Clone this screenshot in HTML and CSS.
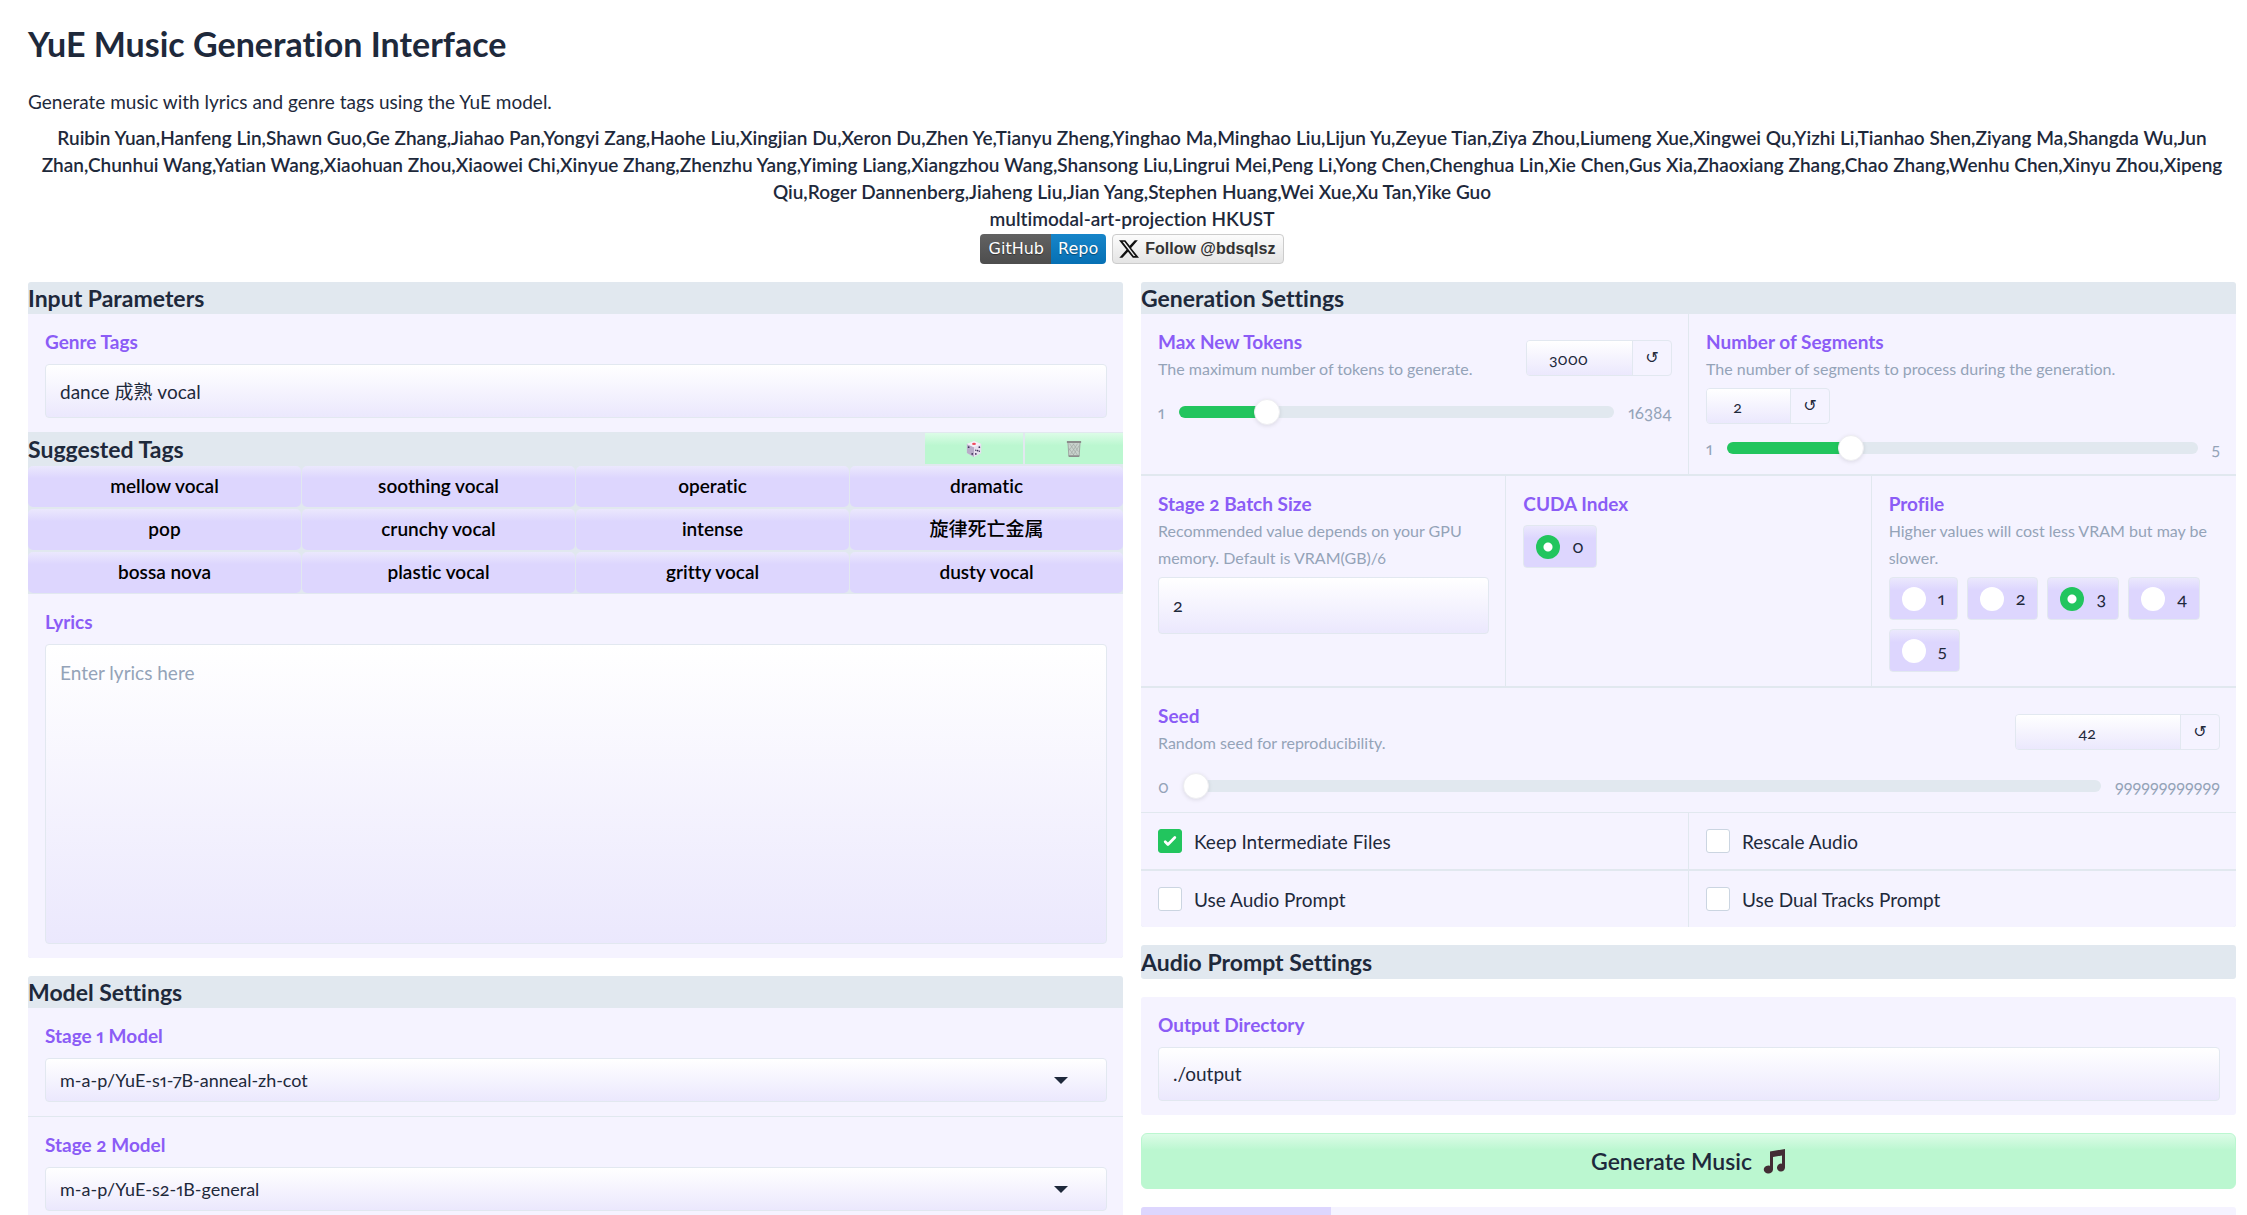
FILE: index.html
```html
<!DOCTYPE html>
<html lang="en">
<head>
<meta charset="utf-8">
<title>YuE Music Generation Interface</title>
<link rel="stylesheet" href="styles.css">
</head>
<body>
<header class="intro">
  <h1>YuE Music Generation Interface</h1>
  <p>Generate music with lyrics and genre tags using the YuE model.</p>
  <div class="credits">
    <div>Ruibin Yuan,Hanfeng Lin,Shawn Guo,Ge Zhang,Jiahao Pan,Yongyi Zang,Haohe Liu,Xingjian Du,Xeron Du,Zhen Ye,Tianyu Zheng,Yinghao Ma,Minghao Liu,Lijun Yu,Zeyue Tian,Ziya Zhou,Liumeng Xue,Xingwei Qu,Yizhi Li,Tianhao Shen,Ziyang Ma,Shangda Wu,Jun<br>Zhan,Chunhui Wang,Yatian Wang,Xiaohuan Zhou,Xiaowei Chi,Xinyue Zhang,Zhenzhu Yang,Yiming Liang,Xiangzhou Wang,Shansong Liu,Lingrui Mei,Peng Li,Yong Chen,Chenghua Lin,Xie Chen,Gus Xia,Zhaoxiang Zhang,Chao Zhang,Wenhu Chen,Xinyu Zhou,Xipeng<br>Qiu,Roger Dannenberg,Jiaheng Liu,Jian Yang,Stephen Huang,Wei Xue,Xu Tan,Yike Guo</div>
    <div>multimodal-art-projection HKUST</div>
  </div>
  <div class="badges">
    <a class="badge-github" href="#"><span>GitHub</span><span>Repo</span></a>
    <a class="badge-x" href="#"><svg viewBox="0 0 24 24" width="20" height="20"><path d="M18.9 1.5h3.7l-8.1 9.2L24 22.5h-7.4l-5.8-7.2-6.700 7.200H.4l8.600-9.600L0 1.500h7.600l5.200 6.600zm-1.300 19h2L6.500 3.400H4.300z" fill="#111"/></svg>Follow @bdsqlsz</a>
  </div>
</header>
<main class="columns">
  <div class="column">
    <section class="group">
      <h3>Input Parameters</h3>
      <div class="block">
        <label class="title" for="genre">Genre Tags</label>
        <input class="field" id="genre" type="text" value="dance 成熟 vocal">
      </div>
      <div class="tags-head">
        <h3>Suggested Tags</h3>
        <button class="tool" aria-label="Shuffle tags"><svg viewBox="0 0 18 20" width="16" height="18"><path d="M9 1l8 3.500v10L9 19l-8-4.500v-10z" fill="#e4dcec"/><path d="M9 8l8-3.500v10L9 19z" fill="#e6dfee"/><path d="M1 4.500L9 8v11l-8-4.500z" fill="#b9acc9"/><path d="M9 1l8 3.500L9 8 1 4.500z" fill="#f4eff7"/><ellipse cx="9" cy="4.300" rx="2.200" ry="1.200" fill="#f04a5a"/><g fill="#42335c"><circle cx="3" cy="8" r="1"/><circle cx="7" cy="15.500" r="1"/><circle cx="11" cy="15.500" r="1"/><circle cx="13" cy="11.800" r="1"/><circle cx="15" cy="8" r="1"/><circle cx="11" cy="11.500" r=".8"/><circle cx="15" cy="12.500" r=".8"/></g></svg></button>
        <button class="tool" aria-label="Clear tags"><svg viewBox="0 0 18 20" width="16" height="18"><path d="M2 3h14l-1.200 15H3.200z" fill="#c9d3cd"/><path d="M4 4l9 13M8 4l6 9M13 4L5 16M9 4l-6 8M15 6L8 17M3 9l6 8" stroke="#a3aaa6" stroke-width=".8" fill="none"/><path d="M2.200 3l1 15M15.800 3l-1 15" stroke="#9ba19e" stroke-width="1"/><path d="M1 1h16v2.200H1z" fill="#8c8c8c"/><path d="M3 17h12v2H3z" fill="#8c8c8c"/></svg></button>
      </div>
      <div class="tags">
        <button>mellow vocal</button><button>soothing vocal</button><button>operatic</button><button>dramatic</button>
        <button>pop</button><button>crunchy vocal</button><button>intense</button><button class="cjk" lang="zh">旋律死亡金属</button>
        <button>bossa nova</button><button>plastic vocal</button><button>gritty vocal</button><button>dusty vocal</button>
      </div>
      <div class="block">
        <label class="title" for="lyrics">Lyrics</label>
        <textarea class="field" id="lyrics" placeholder="Enter lyrics here"></textarea>
      </div>
    </section>
    <section class="group">
      <h3>Model Settings</h3>
      <div class="block">
        <label class="title" for="stage1">Stage 1 Model</label>
        <select class="field" id="stage1"><option>m-a-p/YuE-s1-7B-anneal-zh-cot</option></select>
      </div>
      <div class="block ruled">
        <label class="title" for="stage2">Stage 2 Model</label>
        <select class="field" id="stage2"><option>m-a-p/YuE-s2-1B-general</option></select>
      </div>
    </section>
  </div>
  <div class="column">
    <section class="group">
      <h3>Generation Settings</h3>
      <div class="row two">
        <div class="block slider">
          <div class="slider-head">
            <div><label class="title" for="tokens">Max New Tokens</label><p class="info">The maximum number of tokens to generate.</p></div>
            <div class="number medium"><input type="text" inputmode="numeric" aria-label="Max New Tokens value" value="3000"><button aria-label="Reset">↺</button></div>
          </div>
          <div class="slider-row"><span>1</span><input id="tokens" type="range" min="1" max="16384" value="3000" style="--fill:20%"><span>16384</span></div>
        </div>
        <div class="block slider">
          <div class="slider-head stacked">
            <div><label class="title" for="segments">Number of Segments</label><p class="info">The number of segments to process during the generation.</p></div>
            <div class="number small"><input type="text" inputmode="numeric" aria-label="Number of Segments value" value="2"><button aria-label="Reset">↺</button></div>
          </div>
          <div class="slider-row"><span>1</span><input id="segments" type="range" min="1" max="5" value="2" style="--fill:26%"><span>5</span></div>
        </div>
      </div>
      <div class="row three ruled-thick">
        <div class="block">
          <label class="title" for="batch">Stage 2 Batch Size</label>
          <p class="info">Recommended value depends on your GPU memory. Default is VRAM(GB)/6</p>
          <input class="field" id="batch" type="text" inputmode="numeric" value="2">
        </div>
        <fieldset class="block">
          <legend class="title">CUDA Index</legend>
          <div class="chips"><label><input type="radio" name="cuda" checked>0</label></div>
        </fieldset>
        <fieldset class="block">
          <legend class="title">Profile</legend>
          <p class="info">Higher values will cost less VRAM but may be slower.</p>
          <div class="chips"><label><input type="radio" name="profile">1</label><label><input type="radio" name="profile">2</label><label><input type="radio" name="profile" checked>3</label><label><input type="radio" name="profile">4</label><label><input type="radio" name="profile">5</label></div>
        </fieldset>
      </div>
      <div class="block slider ruled-thick">
        <div class="slider-head">
          <div><label class="title" for="seed">Seed</label><p class="info">Random seed for reproducibility.</p></div>
          <div class="number large"><input type="text" inputmode="numeric" aria-label="Seed value" value="42"><button aria-label="Reset">↺</button></div>
        </div>
        <div class="slider-row"><span>0</span><input id="seed" type="range" min="0" max="999999999999" value="42" style="--fill:0%"><span>999999999999</span></div>
      </div>
      <div class="row two ruled">
        <label class="check"><input type="checkbox" checked>Keep Intermediate Files</label>
        <label class="check"><input type="checkbox">Rescale Audio</label>
      </div>
      <div class="row two ruled-thick">
        <label class="check"><input type="checkbox">Use Audio Prompt</label>
        <label class="check"><input type="checkbox">Use Dual Tracks Prompt</label>
      </div>
    </section>
    <section class="group heading-only"><h3>Audio Prompt Settings</h3></section>
    <section class="group">
      <div class="block">
        <label class="title" for="output">Output Directory</label>
        <input class="field" id="output" type="text" value="./output">
      </div>
    </section>
    <button class="generate">Generate Music <svg viewBox="0 0 24 26" width="24" height="26"><path d="M8 3.500L23 1v18.500a4 4 0 1 1-3-3.800V7.500L11 9v12.500a4.600 4 0 1 1-3-3.800z" fill="#432d35"/></svg></button>
    <section class="group progress"><div class="progress-bar"></div></section>
  </div>
</main>
</body>
</html>
```
FILE: styles.css
```css
* { box-sizing: border-box; }
html { scrollbar-width: none; }
body {
  margin: 0;
  padding: 23px 11px 24px 28px;
  background: #fff;
  color: #1e293b;
  font: 19px/27px Lato, "Noto Sans CJK SC", sans-serif;
  font-variant-numeric: oldstyle-nums proportional-nums;
  font-variant-ligatures: none;
}
h1, h3, p, fieldset { margin: 0; }
button, input, select, textarea {
  font: inherit;
  font-variant-numeric: inherit;
  font-variant-ligatures: inherit;
  color: inherit;
}
h1 { font-size: 34px; line-height: 42px; font-weight: 700; }
h3 { font-size: 23px; line-height: 32px; font-weight: 700; }
.intro p { margin-top: 23px; }
.credits { margin-top: 9px; text-align: center; font-weight: 600; white-space: nowrap; }
.badges { display: flex; justify-content: center; gap: 6px; margin-top: 2px; }
.badges a { display: flex; align-items: center; height: 30px; text-decoration: none; }
.badge-github {
  font: 16px/30px "DejaVu Sans", sans-serif;
  color: #fff;
  text-shadow: 0 1px 1px #0006;
  border-radius: 4px;
  overflow: hidden;
}
.badge-github span { padding: 0 7px 0 9px; background: linear-gradient(#626262, #4d4d4d); }
.badge-github span + span { padding: 0 8px 0 7px; background: linear-gradient(#1785c9, #0670b4); }
.badge-x {
  gap: 6px;
  padding: 0 8px 0 6px;
  border: 1px solid #ccc;
  border-radius: 4px;
  background: linear-gradient(#fcfcfc, #e4e4e4);
  color: #333;
  font: bold 16px/28px "Liberation Sans", sans-serif;
}

.columns { display: grid; grid-template-columns: 1fr 1fr; gap: 18px; margin-top: 18px; align-items: start; }
.column { display: flex; flex-direction: column; gap: 18px; min-width: 0; }
.group { background: #e1e8ef; border-radius: 3px; overflow: hidden; }
.heading-only { padding: 1px 0; }
.block { min-width: 0; border: 0; padding: 14px 16px 14px 17px; background: #f5f3ff; }
.ruled { border-top: 1px solid #e1e8ef; }
.ruled-thick { border-top: 2px solid #e1e8ef; }
.title { display: block; padding: 0; font-weight: 700; color: #8b5cf6; }
legend.title { float: left; width: 100%; }
legend + * { clear: both; }
.info { font-size: 16px; color: #94a3b8; }

.field {
  display: block;
  width: 100%;
  height: 54px;
  margin-top: 9px;
  padding: 0 14px 2px;
  border: 1px solid #e2e8f0;
  border-radius: 4px;
  background: linear-gradient(#fff, #ebe8fd);
  outline: 0;
}
.info + .field { height: 57px; margin-top: 6px; font-size: 18px; }
textarea.field { height: 300px; padding: 14px; resize: none; }
textarea::placeholder { color: #94a3b8; opacity: 1; }
select.field {
  height: 44px;
  padding: 0 14px;
  appearance: none;
  font-size: 18px;
  background:
    url("data:image/svg+xml,%3Csvg xmlns='http://www.w3.org/2000/svg' viewBox='0 0 14 7' fill='%231e293b'%3E%3Cpath d='M0 0h14L7 7z'/%3E%3C/svg%3E") right 38px center / 14px 7px no-repeat,
    linear-gradient(#fff, #ebe8fd);
}

.tags-head { display: grid; grid-template-columns: 1fr 98px 98px; column-gap: 2px; padding-top: 1px; }
.tags-head h3 { line-height: 33px; }
.tool {
  display: flex;
  align-items: center;
  justify-content: center;
  height: 31px;
  border: 0;
  background: linear-gradient(#dcfce7, #bbf7d0 40%);
}
.tags { display: grid; grid-template-columns: repeat(4, 1fr); gap: 2px 1px; padding-bottom: 1px; }
.tags button {
  height: 41px;
  padding: 0 6px 2px;
  border: 0;
  border-radius: 5px;
  background: linear-gradient(#ebe8fd, #ddd6fe 30%);
  color: #000;
  font-weight: 600;
}
.tags .cjk { font-weight: 500; }

.row { display: grid; gap: 1px; }
.two { grid-template-columns: 1fr 1fr; }
.three { grid-template-columns: 1fr 1fr 1fr; }
.block.slider { padding-bottom: 2px; }
.slider-head { display: flex; justify-content: space-between; align-items: center; min-height: 60px; }
.slider-head .info { margin-bottom: 6px; }
.slider-head.stacked { display: block; }
.number { display: flex; height: 36px; border: 1px solid #e2e8f0; border-radius: 4px; overflow: hidden; }
.number input {
  flex: 1;
  min-width: 0;
  padding: 0 36px 0 14px;
  border: 0;
  border-right: 1px solid #e2e8f0;
  background: linear-gradient(#fff, #ebe8fd);
  font-size: 16px;
  text-align: center;
}
.number button { width: 38px; padding: 0; border: 0; background: none; font: 16px/34px "DejaVu Sans", sans-serif; }
.small { width: 124px; }
.medium { width: 146px; }
.large { width: 205px; }
.slider-row { display: flex; align-items: center; gap: 14px; height: 48px; font-size: 17px; color: #94a3b8; }
.slider-row input {
  flex: 1;
  min-width: 0;
  height: 12px;
  margin: 0;
  appearance: none;
  border-radius: 6px;
  background: linear-gradient(#22c55e, #22c55e) left / var(--fill) 100% no-repeat #e1e8ef;
}
.slider-row input::-webkit-slider-thumb {
  appearance: none;
  width: 26px;
  height: 26px;
  border: 1px solid #eeeef2;
  border-radius: 50%;
  background: #fff;
  box-shadow: 0 1px 4px #0000001a;
}

.chips { display: flex; flex-wrap: wrap; gap: 9px; padding-top: 8px; }
.info + .chips { padding-top: 6px; }
.chips label {
  display: flex;
  align-items: center;
  gap: 12px;
  height: 43px;
  padding: 0 12px;
  border: 1px solid #e2e8f0;
  border-radius: 4px;
  background: linear-gradient(#ebe8fd, #ddd6fe 30%);
  font-size: 18px;
}
.chips input, .check input { appearance: none; flex: none; width: 24px; height: 24px; margin: 0; background: #fff; }
.chips input { border-radius: 50%; }
.chips input:checked { background: radial-gradient(#fff 4px, #22c55e 5px); }
.check { display: flex; align-items: center; gap: 12px; height: 56px; padding: 0 17px; background: #f5f3ff; }
.check input { border: 1px solid #cbd5e1; border-radius: 3px; }
.check input:checked {
  border-color: #22c55e;
  background: #22c55e url("data:image/svg+xml,%3Csvg viewBox='0 0 16 16' fill='white' xmlns='http://www.w3.org/2000/svg'%3E%3Cpath d='M12.207 4.793a1 1 0 010 1.414l-5 5a1 1 0 01-1.414 0l-2-2a1 1 0 011.414-1.414L6.500 9.086l4.293-4.293a1 1 0 011.414 0z'/%3E%3C/svg%3E") center / 100%;
}
.generate {
  display: flex;
  align-items: center;
  justify-content: center;
  gap: 10px;
  height: 56px;
  border: 1px solid #bbf7d0;
  border-radius: 6px;
  background: linear-gradient(#dcfce7, #bbf7d0 30%);
  font-size: 23px;
  font-weight: 600;
}
.progress { background: #f5f3ff; }
.progress-bar { width: 190px; height: 40px; background: #ddd6fe; }
```
